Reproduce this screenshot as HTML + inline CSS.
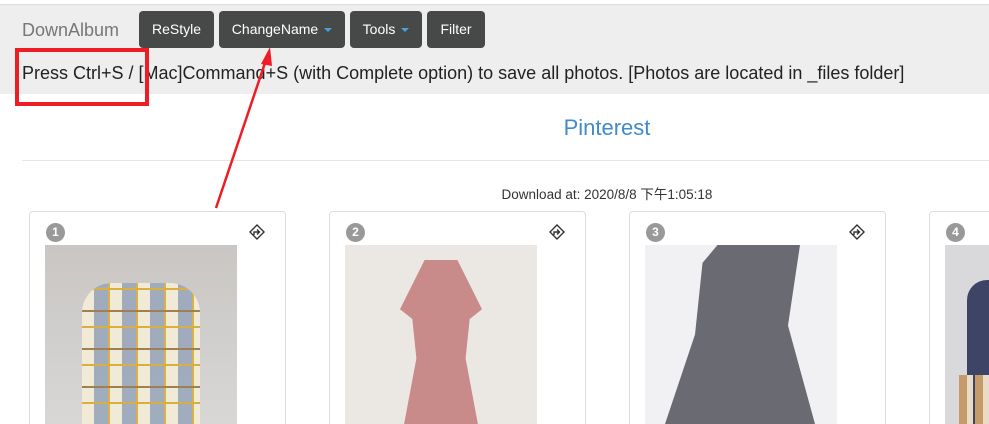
<!DOCTYPE html>
<html><head><meta charset="utf-8"><style>
*{box-sizing:border-box;margin:0;padding:0}
html,body{width:989px;height:424px;overflow:hidden}
body{background:#fff;font-family:"Liberation Sans","Noto Sans CJK SC",sans-serif;position:relative}
.top{position:absolute;left:0;top:4px;width:989px;height:90px;background:#eeeeee;border-top:1px solid #ddd}
.brand{position:absolute;left:22px;top:20px;font-size:18px;color:#777}
.btn{position:absolute;top:11px;height:37px;background:#474949;color:#fff;border-radius:4px;font-size:14px;line-height:37px;text-align:center}
.caret{display:inline-block;width:0;height:0;border-left:4px solid transparent;border-right:4px solid transparent;border-top:4px solid #4a9fe0;margin-left:6px;vertical-align:middle}
.msg{position:absolute;left:22px;top:63px;font-size:18px;color:#222;white-space:nowrap}
.title{position:absolute;left:0;width:1214px;top:115px;text-align:center;font-size:22px;color:#428bca}
.hr{position:absolute;left:22px;right:0;top:160px;border-top:1px solid #e5e5e5}
.dl{position:absolute;left:0;width:1214px;top:183px;text-align:center;font-size:13.5px;color:#333}
.card{position:absolute;top:211px;width:257px;height:213px;border:1px solid #ddd;border-bottom:none;border-radius:4px 4px 0 0;background:#fff;overflow:hidden}
.badge{position:absolute;left:16px;top:11px;width:19px;height:19px;border-radius:50%;background:#999;color:#fff;font-size:12px;font-weight:bold;text-align:center;line-height:19px}
.ico{position:absolute;left:219px;top:12px}
.img{position:absolute;left:15px;top:33px;width:192px;height:179px;overflow:hidden}
</style></head><body>
<div class="top"></div>
<div class="brand">DownAlbum</div>
<div class="btn" style="left:139px;width:75px">ReStyle</div>
<div class="btn" style="left:219px;width:126px">ChangeName<span class="caret"></span></div>
<div class="btn" style="left:350px;width:72px">Tools<span class="caret"></span></div>
<div class="btn" style="left:427px;width:58px">Filter</div>
<div class="msg">Press Ctrl+S / [Mac]Command+S (with Complete option) to save all photos. [Photos are located in _files folder]</div>
<div class="title">Pinterest</div>
<div class="hr"></div>
<div class="dl">Download at: 2020/8/8 下午1:05:18</div>

<div class="card" style="left:29px"><div class="badge">1</div>
<svg class="ico" width="16" height="16" viewBox="0 0 16 16"><path d="M8 1L15 8 8 15 1 8Z" fill="none" stroke="#333" stroke-width="1.4"/><path d="M5 11V8h5M8 5.5l2.5 2.5L8 10.5" fill="none" stroke="#333" stroke-width="1.4"/></svg>
<div class="img" style="background:linear-gradient(#c9c6c3,#d8d7d6)">
<div style="position:absolute;left:37px;top:38px;width:118px;height:141px;border-radius:30px 30px 0 0;background:repeating-linear-gradient(90deg,#f3ecd8 0 12px,#9eabbd 12px 26px,#d9b040 26px 28px),#ccc;opacity:.95"></div>
<div style="position:absolute;left:37px;top:38px;width:118px;height:141px;border-radius:30px 30px 0 0;background:repeating-linear-gradient(0deg,transparent 0 20px,#d9b040 20px 22px,transparent 22px 36px,#a08050 36px 38px)"></div>
</div></div>

<div class="card" style="left:329px"><div class="badge">2</div>
<svg class="ico" width="16" height="16" viewBox="0 0 16 16"><path d="M8 1L15 8 8 15 1 8Z" fill="none" stroke="#333" stroke-width="1.4"/><path d="M5 11V8h5M8 5.5l2.5 2.5L8 10.5" fill="none" stroke="#333" stroke-width="1.4"/></svg>
<div class="img" style="background:#ebe8e4">
<div style="position:absolute;left:55px;top:15px;width:82px;height:164px;background:#c98a8a;clip-path:polygon(30% 0,70% 0,100% 30%,85% 36%,80% 60%,95% 100%,5% 100%,20% 60%,15% 36%,0 30%)"></div>
</div></div>

<div class="card" style="left:629px"><div class="badge">3</div>
<svg class="ico" width="16" height="16" viewBox="0 0 16 16"><path d="M8 1L15 8 8 15 1 8Z" fill="none" stroke="#333" stroke-width="1.4"/><path d="M5 11V8h5M8 5.5l2.5 2.5L8 10.5" fill="none" stroke="#333" stroke-width="1.4"/></svg>
<div class="img" style="background:#f1f1f3">
<div style="position:absolute;left:20px;top:0;width:150px;height:179px;background:#6a6a72;clip-path:polygon(35% 0,90% 0,82% 45%,100% 100%,0 100%,20% 50%,25% 10%)"></div>
</div></div>

<div class="card" style="left:929px"><div class="badge">4</div>
<div class="img" style="background:#d9d9dc">
<div style="position:absolute;left:22px;top:35px;width:40px;height:144px;background:#3d4466;border-radius:20px 0 0 0"></div>
<div style="position:absolute;left:14px;top:130px;width:40px;height:49px;background:repeating-linear-gradient(90deg,#c79a6a 0 8px,#e8dcc8 8px 14px,#3d4466 14px 16px)"></div>
</div></div>

<svg style="position:absolute;left:0;top:0" width="989" height="424">
<rect x="17" y="50" width="130" height="54" fill="none" stroke="#ee1c25" stroke-width="4"/>
<line x1="216" y1="208" x2="266" y2="60" stroke="#ee1c25" stroke-width="2.5"/>
<path d="M270 47L261 64 272 66Z" fill="#ee1c25"/>
</svg>
</body></html>
